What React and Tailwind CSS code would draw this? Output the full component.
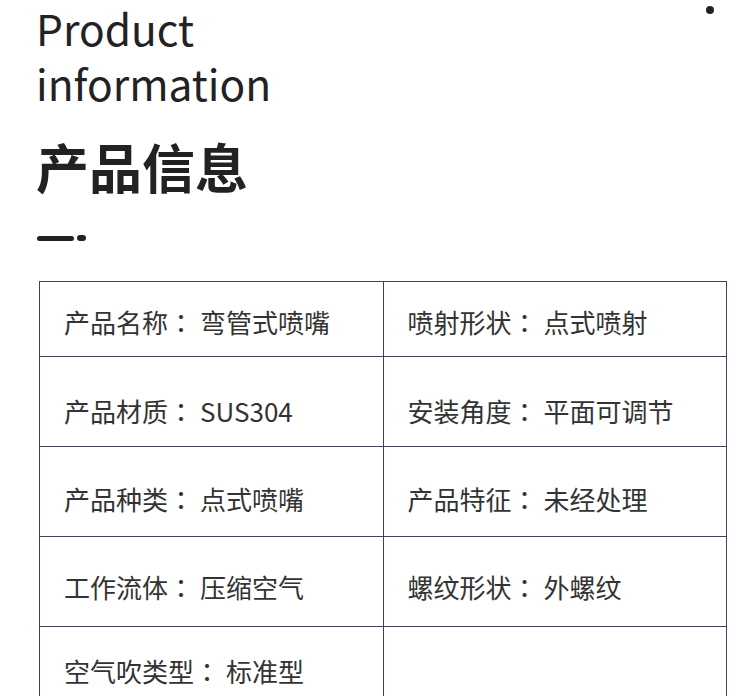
import React from "react";

const rows = [
  { h: "h-[75px]", pt: "pt-[27px]", cells: [["产品名称", "弯管式喷嘴"], ["喷射形状", "点式喷射"]] },
  { h: "h-[90px]", pt: "pt-[41px]", cells: [["产品材质", "SUS304"], ["安装角度", "平面可调节"]] },
  { h: "h-[90px]", pt: "pt-[39px]", cells: [["产品种类", "点式喷嘴"], ["产品特征", "未经处理"]] },
  { h: "h-[90px]", pt: "pt-[37px]", cells: [["工作流体", "压缩空气"], ["螺纹形状", "外螺纹"]] },
  { h: "h-[90px]", pt: "pt-[31px]", cells: [["空气吹类型", "标准型"], null] },
];

export default function App() {
  return (
    <div
      className="relative w-[750px] h-[696px] overflow-hidden bg-white text-[#2b2b2b]"
      style={{ fontFamily: '"Noto Sans CJK SC", "Noto Sans", sans-serif' }}
    >
      <div className="absolute left-[706px] top-[6px] w-[8px] h-[8px] rounded-full bg-[#222]" />
      <div className="pl-[36px]">
        <div className="pt-[3px] text-[42.5px] text-[#222]">
          <div className="leading-[50px]">Product</div>
          <div className="mt-[2px] leading-[56px]">information</div>
        </div>
        <div className="mt-[29px] text-[53px] leading-[53px] font-bold text-[#222]">产品信息</div>
        <div className="mt-[42px] flex items-center gap-[3px] pl-[1px]">
          <div className="w-[37px] h-[5px] rounded-full bg-[#222]" />
          <div className="w-[9px] h-[6px] rounded-full bg-[#222]" />
        </div>
      </div>
      <div className="mt-[40px] ml-[39px] w-[688px] border-l border-t border-[#3d4459] grid grid-cols-2">
        {rows.map((row, i) =>
          row.cells.map((c, j) => (
            <div
              key={i + "-" + j}
              className={`${row.h} ${row.pt} border-r border-b border-[#3d4459] pl-[24px] text-[26px] leading-[26px] text-[#333] flex whitespace-nowrap`}
            >
              {c && (
                <>
                  <span>{c[0]}</span>
                  <span style={{ fontFamily: '"Noto Sans CJK JP", sans-serif' }}>：</span>
                  <span className="ml-[6px]">{c[1]}</span>
                </>
              )}
            </div>
          ))
        )}
      </div>
    </div>
  );
}
